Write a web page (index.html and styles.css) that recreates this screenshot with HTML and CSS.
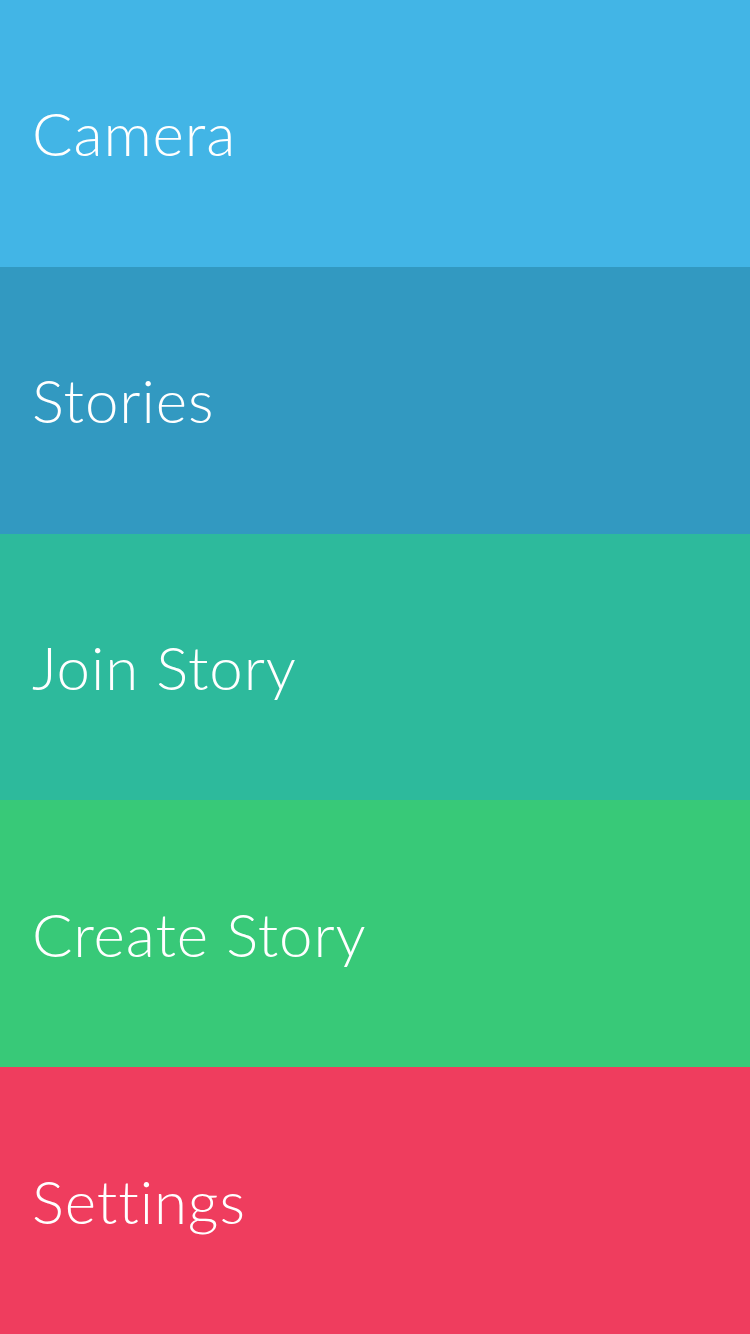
FILE: index.html
```html
<!DOCTYPE html>
<html>
<head>
<meta charset="utf-8">
<link rel="stylesheet" href="styles.css">
</head>
<body>
<nav class="menu">
  <div class="item camera"><span class="label">Camera</span></div>
  <div class="item stories"><span class="label">Stories</span></div>
  <div class="item join"><span class="label">Join Story</span></div>
  <div class="item create"><span class="label">Create Story</span></div>
  <div class="item settings"><span class="label">Settings</span></div>
</nav>
</body>
</html>
```
FILE: styles.css
```css
html, body {
  margin: 0;
  padding: 0;
  width: 750px;
  height: 1334px;
  overflow: hidden;
}
.menu {
  display: flex;
  flex-direction: column;
  height: 1334px;
}
.item {
  flex: 1 1 0;
  display: flex;
  align-items: center;
  padding-left: 32px;
}
.label {
  font-family: Lato, "Open Sans", sans-serif;
  font-weight: 300;
  font-size: 60px;
  line-height: 1;
  letter-spacing: 0.9px;
  font-variant-ligatures: none;
  font-feature-settings: "liga" 0;
  color: #ffffff;
}
.camera { background: #42b5e6; }
.stories { background: #3299c1; }
.join { background: #2dba9c; }
.create { background: #38c978; }
.settings { background: #ef3d5e; }
```
